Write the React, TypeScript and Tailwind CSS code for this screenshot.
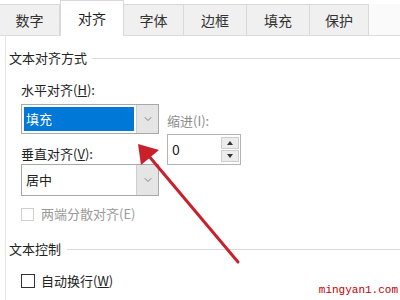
import { ChevronDown } from 'lucide-react';

const tabs = ['数字', '对齐', '字体', '边框', '填充', '保护'];
const widths = [60, 64, 60, 63, 63, 59];

function DropButton() {
  return (
    <div className="w-[22px] h-full bg-[#e5e5e5] border-l border-[#cfcfcf] flex items-center justify-center">
      <ChevronDown className="w-3 h-3 text-[#606060]" strokeWidth={1.5} />
    </div>
  );
}

export default function App() {
  return (
    <div
      className="relative w-[400px] h-[300px] overflow-hidden bg-white text-[#222] text-[13px]"
      style={{ fontFamily: '"Noto Sans CJK SC", "Noto Sans", sans-serif' }}
    >
      {/* tab strip */}
      <div className="flex items-end h-[36px] border-b border-[#dcdcdc]">
        {tabs.map((t, i) => {
          const active = i === 1;
          return (
            <div
              key={t}
              style={{ width: widths[i] }}
              className={`flex items-center justify-center text-[14px] border-t border-r border-[#d9d9d9] ${
                active
                  ? 'h-[36px] bg-white border-l -mb-px pb-px'
                  : 'h-[31px] bg-[#f0f0f0] text-[#333]'
              }`}
            >
              {t}
            </div>
          );
        })}
        <div className="flex-1 h-[31px] bg-[#fafafa]" />
      </div>

      <div className="border-l border-[#e6e6e6] ml-[5px] h-[264px] pl-[3px]">
        {/* section heading */}
        <div className="flex items-center gap-[5px] pt-[13px] h-[31px]">
          <span className="leading-[18px]">文本对齐方式</span>
          <div className="flex-1 border-t border-[#dadada]" />
        </div>

        <div className="flex pl-[12px] pt-[14px]">
          <div className="w-[138px]">
            <div className="leading-[18px]">
              水平对齐(<span className="underline">H</span>):
            </div>
            <div className="mt-[5px] h-[30px] border border-[#a8a8a8] flex">
              <div className="flex-1 p-[2px]">
                <div className="h-full bg-[#0078d7] text-white flex items-center pl-[2px]">填充</div>
              </div>
              <DropButton />
            </div>
            <div className="mt-[11px] leading-[18px]">
              垂直对齐(<span className="underline">V</span>):
            </div>
            <div className="mt-[1px] h-[32px] border border-[#a8a8a8] flex">
              <div className="flex-1 flex items-center pl-[4px]">居中</div>
              <DropButton />
            </div>
          </div>

          <div className="ml-[8px] pt-[31px]">
            <div className="leading-[18px] text-[#8c8c8c]">缩进(I):</div>
            <div className="mt-[4px] w-[74px] h-[31px] border border-[#b4b4b4] flex">
              <div className="flex-1 flex items-center pl-[4px] text-[14px]">0</div>
              <div className="w-[19px] flex flex-col justify-center gap-[1px] pr-[1px]">
                <div className="h-[12px] bg-[#ececec] border border-[#cdcdcd] flex items-center justify-center">
                  <div className="w-0 h-0 border-x-[3px] border-x-transparent border-b-[4px] border-b-[#333]" />
                </div>
                <div className="h-[12px] bg-[#ececec] border border-[#cdcdcd] flex items-center justify-center">
                  <div className="w-0 h-0 border-x-[3px] border-x-transparent border-t-[4px] border-t-[#333]" />
                </div>
              </div>
            </div>
          </div>
        </div>

        <div className="flex items-center pl-[12px] mt-[9px] h-[18px] text-[#9a9a9a]">
          <div className="w-[13px] h-[13px] border border-[#d0d0d0] mr-[7px]" />
          两端分散对齐(E)
        </div>

        <div className="flex items-center gap-[6px] mt-[17px] h-[18px]">
          <span className="leading-[18px]">文本控制</span>
          <div className="flex-1 border-t border-[#dadada]" />
        </div>

        <div className="flex items-center pl-[12px] mt-[14px] h-[18px]">
          <div className="w-[14px] h-[14px] border border-[#333] mr-[6px]" />
          自动换行(<span className="underline">W</span>)
        </div>
      </div>

      {/* red arrow annotation */}
      <svg className="absolute left-0 top-0 pointer-events-none" width="400" height="300">
        <line x1="238" y1="262" x2="148" y2="155" stroke="#c9202b" strokeWidth="3" strokeLinecap="round" />
        <polygon points="138,144 141,165 159,150" fill="#c9202b" />
      </svg>

      <div
        className="absolute right-[2px] bottom-[4px] text-[11px] leading-none text-[#c00000]"
        style={{ fontFamily: '"Liberation Mono", monospace' }}
      >
        mingyan1.com
      </div>
    </div>
  );
}
